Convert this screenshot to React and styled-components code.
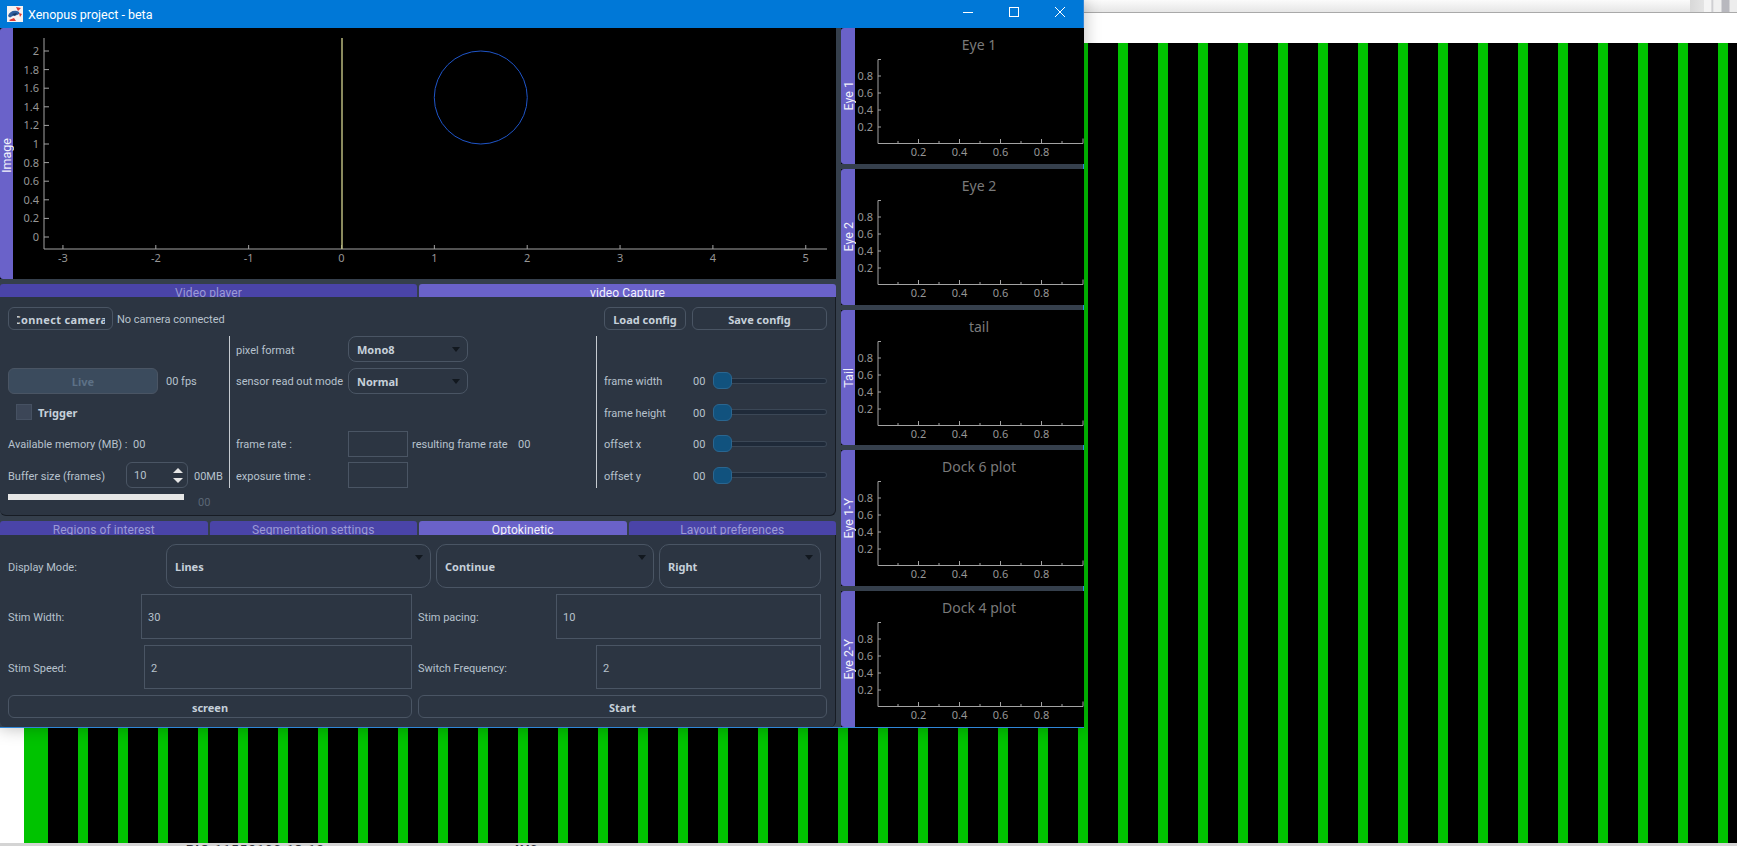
import React from 'react';
import styled, { createGlobalStyle } from 'styled-components';

const GlobalStyle = createGlobalStyle`
  html, body {
    margin: 0;
    padding: 0;
    background: #fff;
  }
  * {
    box-sizing: border-box;
  }
`;

const FONT = 'Roboto, "Noto Sans", sans-serif';
const BOLD_FONT = '"Noto Sans", "Open Sans", sans-serif';

const Desktop = styled.div`
  position: relative;
  width: 1737px;
  height: 846px;
  overflow: hidden;
  display: flex;
  flex-direction: column;
  background: #fff;
  font-family: ${FONT};
`;

const TopStrip = styled.div`
  height: 13px;
  flex: none;
  border-bottom: 1px solid #a9a9a9;
  background:
    linear-gradient(90deg, transparent 1690px, #d8d8d8 1690px, #e4e4e4 1704px, #f4f4f4 1704px, #f4f4f4 1711px, #c4c4c8 1712px, #f0f0f0 1714px, #f0f0f0 1721px, #b8b8be 1722px, #b8b8be 1729px, #ededed 1730px),
    linear-gradient(#fbfbfb, #e6e6e6);
`;

const WhiteBand = styled.div`
  height: 30px;
  flex: none;
`;

const Stripes = styled.div`
  height: 800px;
  flex: none;
  margin-left: 24px;
  background:
    linear-gradient(90deg, #00c300 24px, transparent 24px),
    repeating-linear-gradient(90deg, #000 0, #000 14px, #00c300 14px, #00c300 24px, #000 24px, #000 40px);
`;

const BottomStrip = styled.div`
  flex: 1;
  overflow: hidden;
  display: flex;
  padding-left: 186px;
  background: #d4d4d4;
  color: #33333a;
  font-size: 13px;
  font-weight: 700;
  letter-spacing: 1px;
  line-height: 13px;
`;

const StripText = styled.span`
  flex: none;
  width: 326px;
`;

const Window = styled.div`
  position: absolute;
  left: 0;
  top: 0;
  width: 1084px;
  height: 728px;
  display: flex;
  flex-direction: column;
  border-right: 1px solid #2f86d8;
  border-bottom: 1px solid #2f86d8;
  background: #353f4c;
  box-shadow: 0 0 16px rgba(0, 0, 0, 0.28);
`;

const TitleBar = styled.div`
  height: 28px;
  flex: none;
  display: flex;
  align-items: center;
  padding-left: 7px;
  background: #0078d7;
`;

const TitleText = styled.span`
  margin-left: 5px;
  color: #fff;
  font-size: 12.5px;
  flex: 1;
`;

const WinButton = styled.div`
  width: 46px;
  height: 28px;
  display: flex;
  align-items: center;
  justify-content: center;
  padding-bottom: 4px;
`;

const Body = styled.div`
  flex: 1;
  display: flex;
  min-height: 0;
`;

const LeftColumn = styled.div`
  width: 836px;
  flex: none;
  display: flex;
  flex-direction: column;
`;

const RightColumn = styled.div`
  flex: 1;
  display: flex;
  flex-direction: column;
  gap: 5px;
  padding-left: 5px;
`;

const Dock = styled.div`
  display: flex;
  flex: ${p => (p.$height ? 'none' : 1)};
  height: ${p => (p.$height ? `${p.$height}px` : 'auto')};
  min-height: 0;
  background: #000;
`;

const DockLabel = styled.div`
  width: ${p => p.$width}px;
  flex: none;
  display: flex;
  align-items: center;
  justify-content: center;
  padding-top: ${p => p.$nudge || 0}px;
  background: #6a62c9;
  border-radius: 3px 0 0 3px;
  color: #f1f1fb;
  font-size: 12.5px;
  line-height: 13px;
  white-space: nowrap;
  span {
    writing-mode: vertical-rl;
    transform: rotate(180deg);
  }
`;

const PlotSvg = styled.svg`
  display: block;
  flex: none;
  font-family: ${BOLD_FONT};
  font-size: 11px;
`;

const TabBar = styled.div`
  display: flex;
  flex: none;
  gap: 2px;
  height: ${p => p.$height}px;
  margin-top: 5px;
`;

const Tab = styled.div`
  flex: 1;
  overflow: hidden;
  padding-top: 2px;
  text-align: center;
  font-size: 12px;
  line-height: 15px;
  letter-spacing: 0.1px;
  border-radius: 3px 3px 0 0;
  background: ${p => (p.$active ? '#6a62c9' : '#4a44a8')};
  color: ${p => (p.$active ? '#f2f2fb' : '#9c9ad6')};
`;

const Panel = styled.div`
  flex: ${p => (p.$fill ? 1 : 'none')};
  height: ${p => (p.$fill ? 'auto' : '219px')};
  background: #2c3542;
  border-right: 1px solid #171c24;
  border-bottom: ${p => (p.$fill ? '0' : '1px solid #171c24')};
  border-radius: 0 0 6px 6px;
  color: #b7c2cd;
  font-size: 11px;
  padding: ${p => p.$top}px 0 0 8px;
`;

const ConnectRow = styled.div`
  display: flex;
  align-items: center;
  height: 23px;
  padding-right: 8px;
  gap: 4px;
`;

const Button = styled.div`
  width: ${p => p.$width}px;
  height: ${p => p.$height || 23}px;
  flex: none;
  display: flex;
  align-items: center;
  justify-content: center;
  overflow: hidden;
  padding-top: 1px;
  white-space: nowrap;
  border: 1px solid #4a5564;
  border-radius: 6px;
  color: ${p => (p.$muted ? '#5d7186' : '#c6d0da')};
  background: ${p => (p.$muted ? '#3b4b5d' : 'transparent')};
  font-family: ${BOLD_FONT};
  font-size: 11px;
  font-weight: 700;
`;

// the label does not fit its button in the original, Qt clips it on both sides
const ClippedText = styled.span`
  width: 88px;
  display: flex;
  justify-content: center;
  overflow: hidden;
  letter-spacing: 0.35px;
`;

const Spacer = styled.div`
  flex: 1;
`;

const ConfigButtons = styled.div`
  display: flex;
  gap: 6px;
`;

const Columns = styled.div`
  display: flex;
  height: 152px;
  margin-top: 6px;
`;

const Column = styled.div`
  width: ${p => p.$width}px;
  flex: none;
  display: grid;
  grid-template-rows: repeat(5, 26px);
  row-gap: 5.5px;
  padding-left: ${p => p.$pad || 0}px;
  border-left: ${p => (p.$pad ? '1px solid #c6cbd1' : '0')};
`;

const Row = styled.div`
  display: flex;
  align-items: center;
  white-space: nowrap;
  grid-row: ${p => p.$row || 'auto'};
`;

const Label = styled.span`
  flex: none;
  width: ${p => (p.$width ? `${p.$width}px` : 'auto')};
  margin-left: ${p => p.$left || 0}px;
  padding-top: 2px;
  color: ${p => (p.$dim ? '#5b6776' : 'inherit')};
`;

const Combo = styled.div`
  position: relative;
  width: ${p => p.$width}px;
  height: 100%;
  flex: none;
  display: flex;
  align-items: center;
  padding: 1px 0 0 8px;
  border: 1px solid #4a5564;
  border-radius: ${p => (p.$tall ? 10 : 8)}px;
  color: #c6d0da;
  font-family: ${BOLD_FONT};
  font-weight: 700;
  &::after {
    content: '';
    position: absolute;
    right: 7px;
    top: 10px;
    border-left: 4px solid transparent;
    border-right: 4px solid transparent;
    border-top: 5px solid #12181f;
  }
`;

const CheckBox = styled.div`
  width: 16px;
  height: 16px;
  margin: 0 6px 0 8px;
  background: #3c4657;
  border: 1px solid #465162;
`;

const BoldLabel = styled.span`
  color: #c6d0da;
  font-family: ${BOLD_FONT};
  font-weight: 700;
`;

const SpinBox = styled.div`
  width: 62px;
  height: 100%;
  flex: none;
  display: flex;
  align-items: center;
  justify-content: space-between;
  padding: 0 4px 0 7px;
  border: 1px solid #4a5564;
  border-radius: 6px;
`;

const SpinArrows = styled.div`
  display: flex;
  flex-direction: column;
  gap: 5px;
`;

const SpinArrow = styled.div`
  border-left: 5px solid transparent;
  border-right: 5px solid transparent;
  ${p => (p.$down ? 'border-top: 5px solid #e6e6e6;' : 'border-bottom: 5px solid #e6e6e6;')}
`;

const Field = styled.div`
  width: ${p => p.$width}px;
  height: 100%;
  flex: none;
  display: flex;
  align-items: center;
  padding: 2px 0 0 6px;
  border: 1px solid #4a5564;
`;

const Slider = styled.div`
  flex: 1;
  display: flex;
  align-items: center;
`;

const SliderHandle = styled.div`
  width: 19px;
  height: 17px;
  flex: none;
  background: #11527e;
  border: 1px solid #2a6690;
  border-radius: 6px;
`;

const SliderTrack = styled.div`
  flex: 1;
  height: 6px;
  background: #1f2a39;
  border: 1px solid #3b4756;
  border-left: 0;
  border-radius: 0 3px 3px 0;
`;

const ProgressRow = styled.div`
  display: flex;
  margin-top: 6px;
`;

const ProgressBar = styled.div`
  width: 176px;
  height: 6px;
  background: #e6e6e6;
  margin-right: 14px;
`;

const FormRows = styled.div`
  display: flex;
  flex-direction: column;
  gap: 6px;
`;

const FormRow = styled.div`
  display: flex;
  align-items: center;
  height: ${p => p.$height}px;
  gap: ${p => p.$gap || 0}px;
`;

const MAIN_X = [-3, -2, -1, 0, 1, 2, 3, 4, 5];
const MAIN_Y = [0, 0.2, 0.4, 0.6, 0.8, 1, 1.2, 1.4, 1.6, 1.8, 2];
const AXIS = '#a3a3a3';
const TICK_TEXT = '#969696';

const MainPlot = () => {
  const px = v => 328.5 + v * 92.85;
  const py = v => 209 - v * 93;
  return (
    <PlotSvg width="823" height="251">
      <path d="M31 10V221H814" stroke={AXIS} fill="none" />
      {MAIN_X.map(v => (
        <g key={v}>
          <path d={`M${px(v)} 221v-4`} stroke={AXIS} />
          <text x={px(v)} y="234" fill={TICK_TEXT} textAnchor="middle">{v}</text>
        </g>
      ))}
      {MAIN_Y.map(v => (
        <g key={v}>
          <path d={`M31 ${py(v)}h5`} stroke={AXIS} />
          <text x="26" y={py(v) + 4} fill={TICK_TEXT} textAnchor="end">{v}</text>
        </g>
      ))}
      <path d="M329 10V221" stroke="#b9b97c" strokeWidth="1.5" />
      <circle cx={px(1.5)} cy={py(1.5)} r="46.5" fill="none" stroke="#1f55c8" />
    </PlotSvg>
  );
};

const SIDE_X = [0.2, 0.4, 0.6, 0.8];
const SIDE_MINOR = [0.1, 0.3, 0.5, 0.7, 0.9];
const SIDE_Y = [0.2, 0.4, 0.6, 0.8];

const SidePlot = ({ title }) => {
  const px = v => 22.5 + v * 205;
  const py = v => 116 - v * 85;
  return (
    <PlotSvg width="229" height="136">
      <text x="124" y="22" fill="#7a7a7a" fontSize="14" textAnchor="middle">{title}</text>
      <path d="M26 31.5H23V115.5H228" stroke={AXIS} fill="none" />
      <path d="M228 115.5v-5" stroke={AXIS} />
      {SIDE_X.map(v => (
        <g key={v}>
          <path d={`M${px(v)} 115v-4`} stroke={AXIS} />
          <text x={px(v)} y="128" fill={TICK_TEXT} textAnchor="middle">{v}</text>
        </g>
      ))}
      {SIDE_MINOR.map(v => (
        <path key={v} d={`M${px(v)} 115v-2`} stroke={AXIS} />
      ))}
      {SIDE_Y.map(v => (
        <g key={v}>
          <path d={`M23 ${py(v)}h3`} stroke={AXIS} />
          <text x="18" y={py(v) + 4} fill={TICK_TEXT} textAnchor="end">{v}</text>
        </g>
      ))}
    </PlotSvg>
  );
};

const AppIcon = () => (
  <svg width="16" height="16" viewBox="0 0 16 16">
    <rect width="16" height="16" fill="#f4f2f2" />
    <path d="M1 10C2 6 6 4 10 5c2 .5 3 2 2 3-2 2-6 1-8 3-1 1-2 0-3-1z" fill="#2f5f9e" />
    <path d="M9 1l5 1-3 3zM12 7l3 1-2 3zM2 14l5-2 2 3H3z" fill="#df3a32" />
    <path d="M5 8l5-1-2 3z" fill="#17365f" />
  </svg>
);

const WinIcon = ({ kind }) => (
  <svg width="10" height="10" viewBox="0 0 10 10" stroke="#fff" fill="none">
    {kind === 'min' && <path d="M0 5.5H10" />}
    {kind === 'max' && <rect x="0.5" y="0.5" width="9" height="9" />}
    {kind === 'close' && <path d="M0 0L10 10M10 0L0 10" />}
  </svg>
);

const sidePlots = [
  { label: 'Eye 1', title: 'Eye 1' },
  { label: 'Eye 2', title: 'Eye 2' },
  { label: 'Tail', title: 'tail' },
  { label: 'Eye 1-Y', title: 'Dock 6 plot' },
  { label: 'Eye 2-Y', title: 'Dock 4 plot' },
];

const sliders = [
  { label: 'frame width', row: 2 },
  { label: 'frame height', row: 3 },
  { label: 'offset x', row: 4 },
  { label: 'offset y', row: 5 },
];

const App = () => (
  <>
    <GlobalStyle />
    <Desktop>
      <TopStrip />
      <WhiteBand />
      <Stripes />
      <BottomStrip>
        <StripText>RIO 11552100 13:12</StripText>
        <span>4V0</span>
      </BottomStrip>

      <Window>
        <TitleBar>
          <AppIcon />
          <TitleText>Xenopus project - beta</TitleText>
          <WinButton><WinIcon kind="min" /></WinButton>
          <WinButton><WinIcon kind="max" /></WinButton>
          <WinButton><WinIcon kind="close" /></WinButton>
        </TitleBar>

        <Body>
          <LeftColumn>
            <Dock $height={251}>
              <DockLabel $width={13} $nudge={3}><span>Image</span></DockLabel>
              <MainPlot />
            </Dock>

            <TabBar $height={13}>
              <Tab>Video player</Tab>
              <Tab $active>video Capture</Tab>
            </TabBar>
            <Panel $top={10}>
              <ConnectRow>
                <Button $width={105}><ClippedText>Connect camera</ClippedText></Button>
                <Label>No camera connected</Label>
                <Spacer />
                <ConfigButtons>
                  <Button $width={82}>Load config</Button>
                  <Button $width={135}>Save config</Button>
                </ConfigButtons>
              </ConnectRow>

              <Columns>
                <Column $width={221}>
                  <Row $row={2}>
                    <Button $width={150} $height={26} $muted>Live</Button>
                    <Label $left={8}>00 fps</Label>
                  </Row>
                  <Row $row={3}>
                    <CheckBox />
                    <BoldLabel>Trigger</BoldLabel>
                  </Row>
                  <Row $row={4}>
                    <Label $width={125}>Available memory (MB) :</Label>
                    <Label>00</Label>
                  </Row>
                  <Row $row={5}>
                    <Label $width={118}>Buffer size (frames)</Label>
                    <SpinBox>
                      10
                      <SpinArrows>
                        <SpinArrow />
                        <SpinArrow $down />
                      </SpinArrows>
                    </SpinBox>
                    <Label $left={6}>00MB</Label>
                  </Row>
                </Column>

                <Column $width={367} $pad={6}>
                  <Row $row={1}>
                    <Label $width={112}>pixel format</Label>
                    <Combo $width={120}>Mono8</Combo>
                  </Row>
                  <Row $row={2}>
                    <Label $width={112}>sensor read out mode</Label>
                    <Combo $width={120}>Normal</Combo>
                  </Row>
                  <Row $row={4}>
                    <Label $width={112}>frame rate :</Label>
                    <Field $width={60} />
                    <Label $left={4} $width={106}>resulting frame rate</Label>
                    <Label>00</Label>
                  </Row>
                  <Row $row={5}>
                    <Label $width={112}>exposure time :</Label>
                    <Field $width={60} />
                  </Row>
                </Column>

                <Column $width={231} $pad={7}>
                  {sliders.map(s => (
                    <Row key={s.label} $row={s.row}>
                      <Label $width={89}>{s.label}</Label>
                      <Label $width={20}>00</Label>
                      <Slider>
                        <SliderHandle />
                        <SliderTrack />
                      </Slider>
                    </Row>
                  ))}
                </Column>
              </Columns>

              <ProgressRow>
                <ProgressBar />
                <Label $dim>00</Label>
              </ProgressRow>
            </Panel>

            <TabBar $height={14}>
              <Tab>Regions of interest</Tab>
              <Tab>Segmentation settings</Tab>
              <Tab $active>Optokinetic</Tab>
              <Tab>Layout preferences</Tab>
            </TabBar>
            <Panel $fill $top={9}>
              <FormRows>
                <FormRow $height={44} $gap={5}>
                  <Label $width={153}>Display Mode:</Label>
                  <Combo $width={265} $tall>Lines</Combo>
                  <Combo $width={218} $tall>Continue</Combo>
                  <Combo $width={162} $tall>Right</Combo>
                </FormRow>
                <FormRow $height={45} $gap={6}>
                  <Label $width={127}>Stim Width:</Label>
                  <Field $width={271}>30</Field>
                  <Label $width={132}>Stim pacing:</Label>
                  <Field $width={265}>10</Field>
                </FormRow>
                <FormRow $height={44} $gap={6}>
                  <Label $width={130}>Stim Speed:</Label>
                  <Field $width={268}>2</Field>
                  <Label $width={172}>Switch Frequency:</Label>
                  <Field $width={225}>2</Field>
                </FormRow>
                <FormRow $height={23} $gap={6}>
                  <Button $width={404}>screen</Button>
                  <Button $width={409}>Start</Button>
                </FormRow>
              </FormRows>
            </Panel>
          </LeftColumn>

          <RightColumn>
            {sidePlots.map(p => (
              <Dock key={p.title}>
                <DockLabel $width={14}><span>{p.label}</span></DockLabel>
                <SidePlot title={p.title} />
              </Dock>
            ))}
          </RightColumn>
        </Body>
      </Window>
    </Desktop>
  </>
);

export default App;
